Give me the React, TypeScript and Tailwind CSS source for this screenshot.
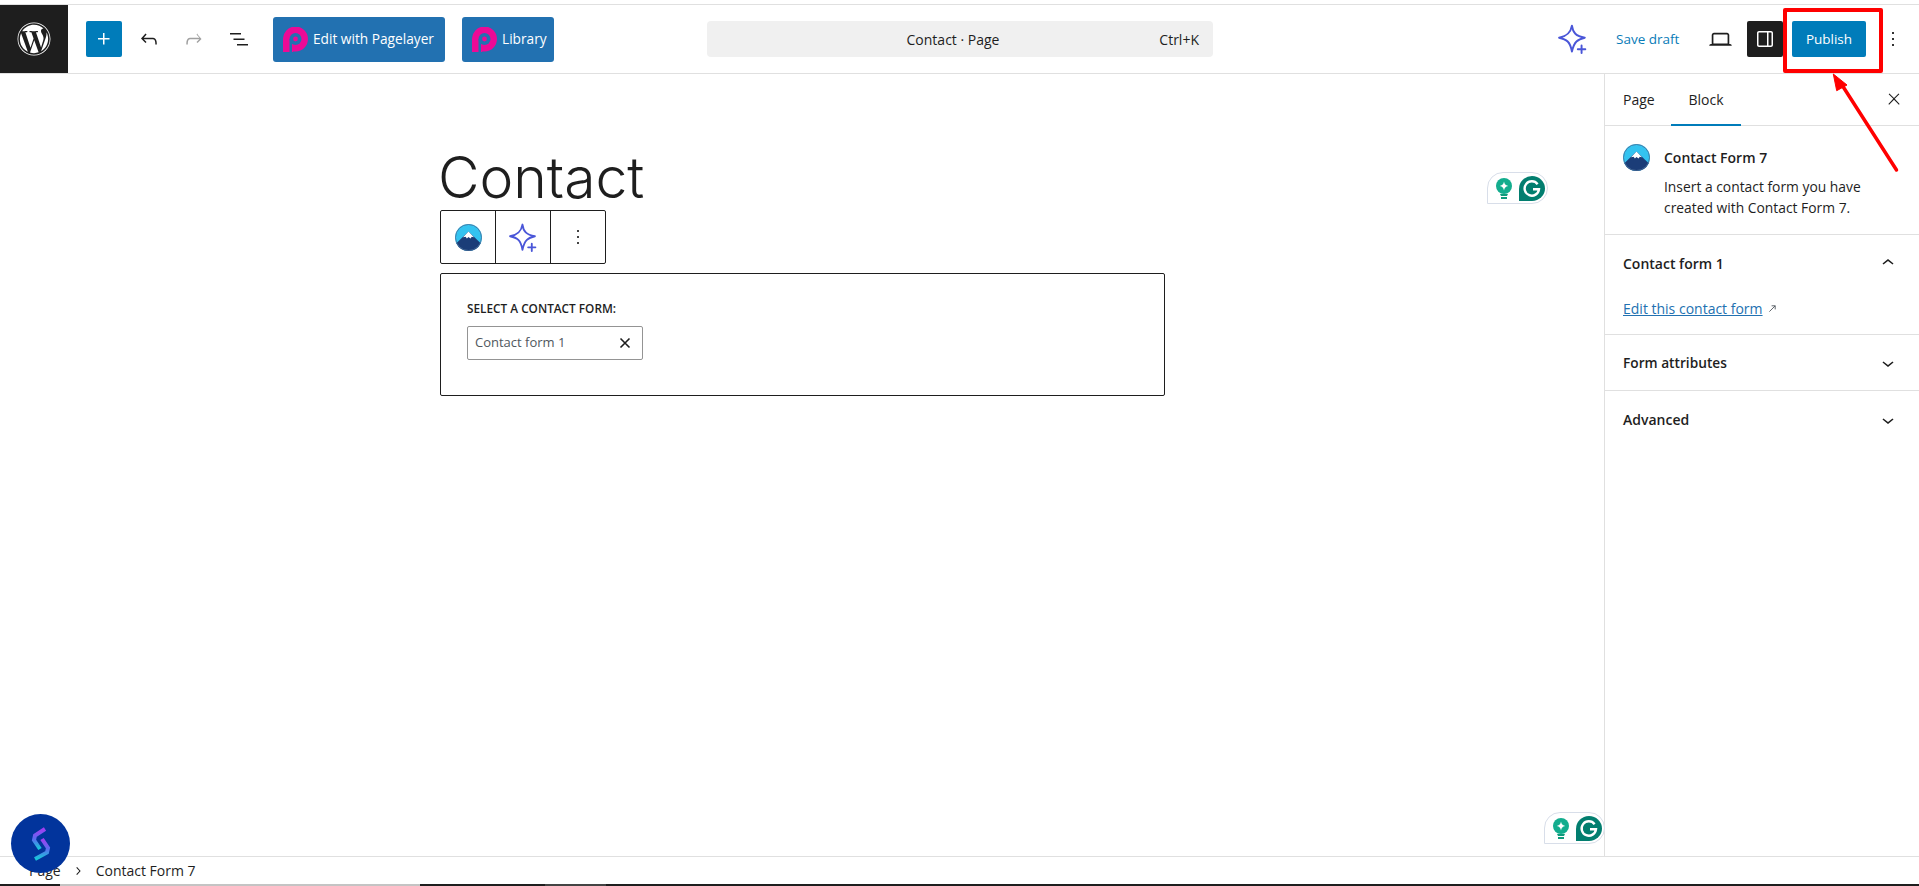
import React from "react";
import { FaWordpress } from "react-icons/fa";

const UI = "font-['Open_Sans',sans-serif]";

function WpIcon({ d, className = "w-6 h-6" }: { d: string; className?: string }) {
  return (
    <svg viewBox="0 0 24 24" className={className} fill="currentColor">
      <path d={d} />
    </svg>
  );
}

function Sparkle({ className }: { className: string }) {
  return (
    <svg viewBox="0 0 28 28" className={className} fill="none" stroke="#4a56d8" strokeWidth="1.8" strokeLinejoin="round" strokeLinecap="round">
      <path d="M13 1.5c.9 6.6 3.6 9.9 12 11.3-6.6 1.4-10 3.6-12 13-1.6-9.4-5-11.6-12-13 7.6-1.4 10.8-4.7 12-11.3z" />
      <path d="M22 20v7M18.5 23.5h7" />
    </svg>
  );
}

function Cf7Logo({ className }: { className: string }) {
  return (
    <svg viewBox="0 0 27 27" className={className}>
      <circle cx="13.5" cy="13.5" r="13.5" fill="#33c3f0" />
      <path d="M1.3 19.2 13.5 7.6l12.2 11.6A13.5 13.5 0 0 1 13.5 27 13.5 13.5 0 0 1 1.3 19.2z" fill="#1b3d78" />
      <path d="M8 13.2 13.5 7.6l5.5 5.6-2.2-.4-1.3 1.8-2-1.6-1.6 1.6-1.3-1.8z" fill="#fff" />
      <circle cx="13.5" cy="13.5" r="13" fill="none" stroke="#4a6a94" strokeWidth="0.8" />
    </svg>
  );
}

function PagelayerButton({ label, className }: { label: string; className: string }) {
  return (
    <div className={`h-[45px] rounded-[3px] bg-[#2271b1] flex items-center pl-[10px] text-white text-[13.7px] ${className}`}>
      <svg viewBox="0 0 25 25" className="w-[25px] h-[25px] mr-[5px] shrink-0">
        <path d="M0 25V12.5a12.5 12.5 0 1 1 12.5 12H10V25z" fill="#ec0a96" />
        <circle cx="12.5" cy="12" r="6" fill="#2271b1" />
        <path d="M6.5 12v13h2.5V12z" fill="#2271b1" />
        <circle cx="12.5" cy="12" r="2.4" fill="#ec0a96" />
      </svg>
      {label}
    </div>
  );
}

function GrammarlyBadge({ className }: { className: string }) {
  return (
    <div className={`absolute w-[61px] h-[32px] bg-white border border-[#d8dee9] rounded-t-[16px] rounded-br-[16px] flex items-center pl-[8px] gap-[7px] ${className}`}>
      <svg viewBox="0 0 16 21" className="w-[16px] h-[21px] shrink-0">
        <circle cx="8" cy="8" r="8" fill="#13ad8e" />
        <path d="M8 3.6c.5 2.6 1.5 3.8 4.2 4.4C9.5 8.6 8.5 9.8 8 12.4 7.5 9.8 6.5 8.6 3.8 8 6.5 7.4 7.5 6.2 8 3.6z" fill="#fff" />
        <path d="M4 16h8l-1 2H5zM5 19h6v2H5z" fill="#0e9b7b" />
      </svg>
      <svg viewBox="0 0 26 25" className="w-[26px] h-[25px] shrink-0">
        <path d="M13 0a13 12.5 0 1 1 0 25H0V13A13 13 0 0 1 13 0z" fill="#027e6f" />
        <path d="M18.6 8.2a7.2 7.2 0 1 0 1.4 5H14" fill="none" stroke="#fff" strokeWidth="2.4" />
      </svg>
    </div>
  );
}

export default function App() {
  return (
    <div className={`${UI} relative w-[1919px] h-[886px] overflow-hidden bg-white text-[#1e1e1e] text-[14px] flex flex-col`}>
      <div className="h-[5px] shrink-0 border-b border-[#e0e0e0]" />

      <header className="h-[69px] shrink-0 flex items-center border-b border-[#e0e0e0]">
        <div className="w-[707px] h-full flex items-center shrink-0">
          <div className="w-[68px] h-full bg-[#1e1e1e] flex items-center justify-center text-white shrink-0">
            <FaWordpress className="w-[34px] h-[34px]" />
          </div>
          <div className="w-[36px] h-[36px] ml-[18px] rounded-[2px] bg-[#007cba] text-white flex items-center justify-center">
            <WpIcon d="M11 12.5V17.5H12.5V12.5H17.5V11H12.5V6H11V11H6V12.5H11Z" />
          </div>
          <WpIcon className="w-6 h-6 ml-[15px]" d="M18.3 11.7c-.6-.6-1.4-.9-2.3-.9H6.7l2.9-3.3-1.1-1-4.5 5L8.5 16l1-1-2.7-2.7H16c.5 0 .9.2 1.3.5 1 1 1 3.4 1 4.5v.3h1.5v-.2c0-1.5 0-4.3-1.5-5.7z" />
          <WpIcon className="w-6 h-6 ml-[21px] text-[#a0a0a0]" d="M15.6 6.5l-1.1 1 2.9 3.3H8c-.9 0-1.7.3-2.3.9-1.4 1.5-1.4 4.2-1.4 5.6v.2h1.5v-.3c0-1.1 0-3.5 1-4.5.3-.3.7-.5 1.3-.5h9.2L14.5 15l1 1.1 4-4-3.9-4.6z" />
          <WpIcon className="w-6 h-6 ml-[21px]" d="M3 6h11v1.5H3V6zm3.5 5.5h11V13h-11v-1.5zM21 17H10v1.5h11V17z" />
          <PagelayerButton label="Edit with Pagelayer" className="w-[172px] ml-[22px]" />
          <PagelayerButton label="Library" className="w-[92px] ml-[17px]" />
        </div>

        <div className="w-[506px] h-[36px] shrink-0 rounded-[4px] bg-[#f0f0f0] relative flex items-center justify-center pr-[14px] pt-[1px]">
          <span>Contact · Page</span>
          <span className="absolute right-[14px]">Ctrl+K</span>
        </div>

        <div className="flex-1 h-full flex items-center">
          <Sparkle className="w-[30px] h-[30px] ml-[345px] shrink-0" />
          <span className="ml-[28px] text-[#0a7cb8] text-[13.5px] w-[66px] shrink-0 pt-[1px] whitespace-nowrap">Save draft</span>
          <WpIcon className="w-[27px] h-[27px] ml-[25px] shrink-0" d="M20.5 16h-.7V8c0-1.1-.9-2-2-2H6.2c-1.1 0-2 .9-2 2v8h-.7c-.8 0-1.5.7-1.5 1.5h20c0-.8-.7-1.5-1.5-1.5zM5.7 8c0-.3.2-.5.5-.5h11.6c.3 0 .5.2.5.5v7.6H5.7V8z" />
          <div className="w-[36px] h-[36px] ml-[13px] rounded-[2px] bg-[#1e1e1e] text-white flex items-center justify-center shrink-0">
            <WpIcon d="M18 4H6c-1.1 0-2 .9-2 2v12c0 1.1.9 2 2 2h12c1.1 0 2-.9 2-2V6c0-1.1-.9-2-2-2zm-4 14.5H6c-.3 0-.5-.2-.5-.5V6c0-.3.2-.5.5-.5h8v13zm4.5-.5c0 .3-.2.5-.5.5h-2.5v-13H18c.3 0 .5.2.5.5v12z" />
          </div>
          <div className="w-[74px] h-[36px] ml-[9px] rounded-[2px] bg-[#007cba] text-white text-[13.5px] flex items-center justify-center shrink-0 pt-[1px]">Publish</div>
          <WpIcon className="w-6 h-6 ml-[15px] shrink-0 text-[#333]" d="M13 19h-2v-2h2v2zm0-6h-2v-2h2v2zm0-6h-2V5h2v2z" />
        </div>
      </header>

      <div className="flex-1 flex min-h-0">
        <main className="flex-1 relative">
          <div className="ml-[440px] w-[725px] pt-[71px] flex flex-col">
            <h1 className="font-['Inter',sans-serif] font-[350] text-[57px] leading-[65px] -ml-[2px] text-[#1e1e1e]">Contact</h1>
            <div className="w-[166px] h-[54px] border border-[#1e1e1e] rounded-[2px] flex bg-white">
              <div className="w-[55px] flex items-center justify-center border-r border-[#1e1e1e]">
                <Cf7Logo className="w-[27px] h-[27px]" />
              </div>
              <div className="w-[55px] flex items-center justify-center border-r border-[#1e1e1e]">
                <Sparkle className="w-[29px] h-[29px]" />
              </div>
              <div className="flex-1 flex items-center justify-center text-[#444]">
                <WpIcon d="M13 19h-2v-2h2v2zm0-6h-2v-2h2v2zm0-6h-2V5h2v2z" />
              </div>
            </div>
            <div className="mt-[9px] h-[123px] border border-[#1e1e1e] rounded-[2px] pl-[26px] pt-[26px]">
              <div className="text-[11.8px] leading-[16px] font-semibold uppercase">Select a contact form:</div>
              <div className="mt-[10px] w-[176px] h-[34px] border border-[#949494] rounded-[2px] flex items-center justify-between pl-[7px] pr-[11px] text-[13px] text-[#50575e]">
                <span>Contact form 1</span>
                <svg viewBox="0 0 12 12" className="w-[12px] h-[12px]" stroke="#1e1e1e" strokeWidth="1.6"><path d="M1.5 1.5l9 9M10.5 1.5l-9 9" /></svg>
              </div>
            </div>
          </div>
          <GrammarlyBadge className="left-[1487px] top-[98px]" />
          <GrammarlyBadge className="left-[1544px] top-[738px]" />
        </main>

        <aside className="w-[315px] shrink-0 border-l border-[#e0e0e0] flex flex-col">
          <div className="h-[52px] shrink-0 border-b border-[#e0e0e0] flex items-stretch relative">
            <div className="ml-[18px] w-[48px] flex items-center">Page</div>
            <div className="w-[70px] flex items-center justify-center border-b-2 border-[#007cba] h-[52px]">Block</div>
            <WpIcon className="absolute right-[16px] top-[16px] w-[18px] h-[18px]" d="M13 11.8l6.1-6.3-1-1-6.1 6.2-6.1-6.2-1 1 6.1 6.3-6.5 6.7 1 1 6.5-6.6 6.5 6.6 1-1z" />
          </div>

          <div className="h-[109px] shrink-0 border-b border-[#e0e0e0] pl-[18px] pt-[18px] flex">
            <Cf7Logo className="w-[27px] h-[27px] shrink-0" />
            <div className="ml-[14px] leading-[21px]">
              <div className="font-semibold mt-[3px]">Contact Form 7</div>
              <div className="mt-[8px] text-[13.85px]">Insert a contact form you have<br />created with Contact Form 7.</div>
            </div>
          </div>

          <div className="h-[100px] shrink-0 border-b border-[#e0e0e0] px-[18px]">
            <div className="h-[56px] flex items-center justify-between font-semibold">
              Contact form 1
              <WpIcon className="w-6 h-6 mr-[1px]" d="M6.5 12.4L12 8l5.5 4.4-.9 1.2L12 10l-4.5 3.6-1-1.2z" />
            </div>
            <div className="mt-[7px] flex items-center">
              <span className="text-[#2271b1] underline">Edit this contact form</span>
              <svg viewBox="0 0 10 10" className="w-[9px] h-[9px] ml-[5px]" fill="none" stroke="#50575e" strokeWidth="1"><path d="M1.5 8.5l6.5-6.5M4 2h4v4" /></svg>
            </div>
          </div>

          <div className="h-[56px] shrink-0 border-b border-[#e0e0e0] px-[18px] pt-[1px] flex items-center justify-between font-semibold text-[13.7px]">
            Form attributes
            <WpIcon className="w-6 h-6 mr-[1px]" d="M17.5 11.6L12 16l-5.5-4.4.9-1.2L12 14l4.5-3.6 1 1.2z" />
          </div>
          <div className="h-[56px] shrink-0 px-[18px] pt-[1px] flex items-center justify-between font-semibold">
            Advanced
            <WpIcon className="w-6 h-6 mr-[1px]" d="M17.5 11.6L12 16l-5.5-4.4.9-1.2L12 14l4.5-3.6 1 1.2z" />
          </div>
        </aside>
      </div>

      <footer className="h-[28px] shrink-0 border-t border-[#e0e0e0] flex items-center pl-[29px]">
        <span>Page</span>
        <WpIcon className="w-[16px] h-[16px] ml-[9px]" d="M10.6 6L9.4 7l4.6 5-4.6 5 1.2 1 5.4-6z" />
        <span className="ml-[10px]">Contact Form 7</span>
      </footer>
      <div className="h-[2px] shrink-0 flex bg-[#1e1e1e]">
        <div className="w-[60px]" />
        <div className="w-[360px] bg-[#c4c4c4]" />
        <div className="w-[125px]" />
        <div className="w-[61px] bg-[#444444]" />
      </div>

      <div className="absolute left-[11px] top-[814px] w-[59px] h-[59px] rounded-full bg-[#02349c] flex items-center justify-center">
        <svg viewBox="0 0 20 34" className="w-[20px] h-[34px]">
          <defs>
            <linearGradient id="sg" x1="0" y1="0" x2="0" y2="1">
              <stop offset="0" stopColor="#a23df0" />
              <stop offset="0.5" stopColor="#5b6cf0" />
              <stop offset="1" stopColor="#16c8d8" />
            </linearGradient>
          </defs>
          <path d="M14 2 4 8.5 3 13l6 9" fill="none" stroke="url(#sg)" strokeWidth="4" />
          <path d="M11 12l6 9-1 4.5L4 32" fill="none" stroke="url(#sg)" strokeWidth="4" />
        </svg>
      </div>

      <div className="absolute left-[1783px] top-[8px] w-[100px] h-[65px] border-[4px] border-[#ff0000] rounded-[2px]" />
      <svg className="absolute left-[1820px] top-[65px] w-[90px] h-[115px]" viewBox="0 0 90 115">
        <path d="M76.5 105 22 20" stroke="#ff0000" strokeWidth="3.5" strokeLinecap="round" />
        <path d="M13.3 9 16.7 25.7 27 20z" fill="#ff0000" stroke="#ff0000" strokeWidth="1" />
      </svg>
    </div>
  );
}
